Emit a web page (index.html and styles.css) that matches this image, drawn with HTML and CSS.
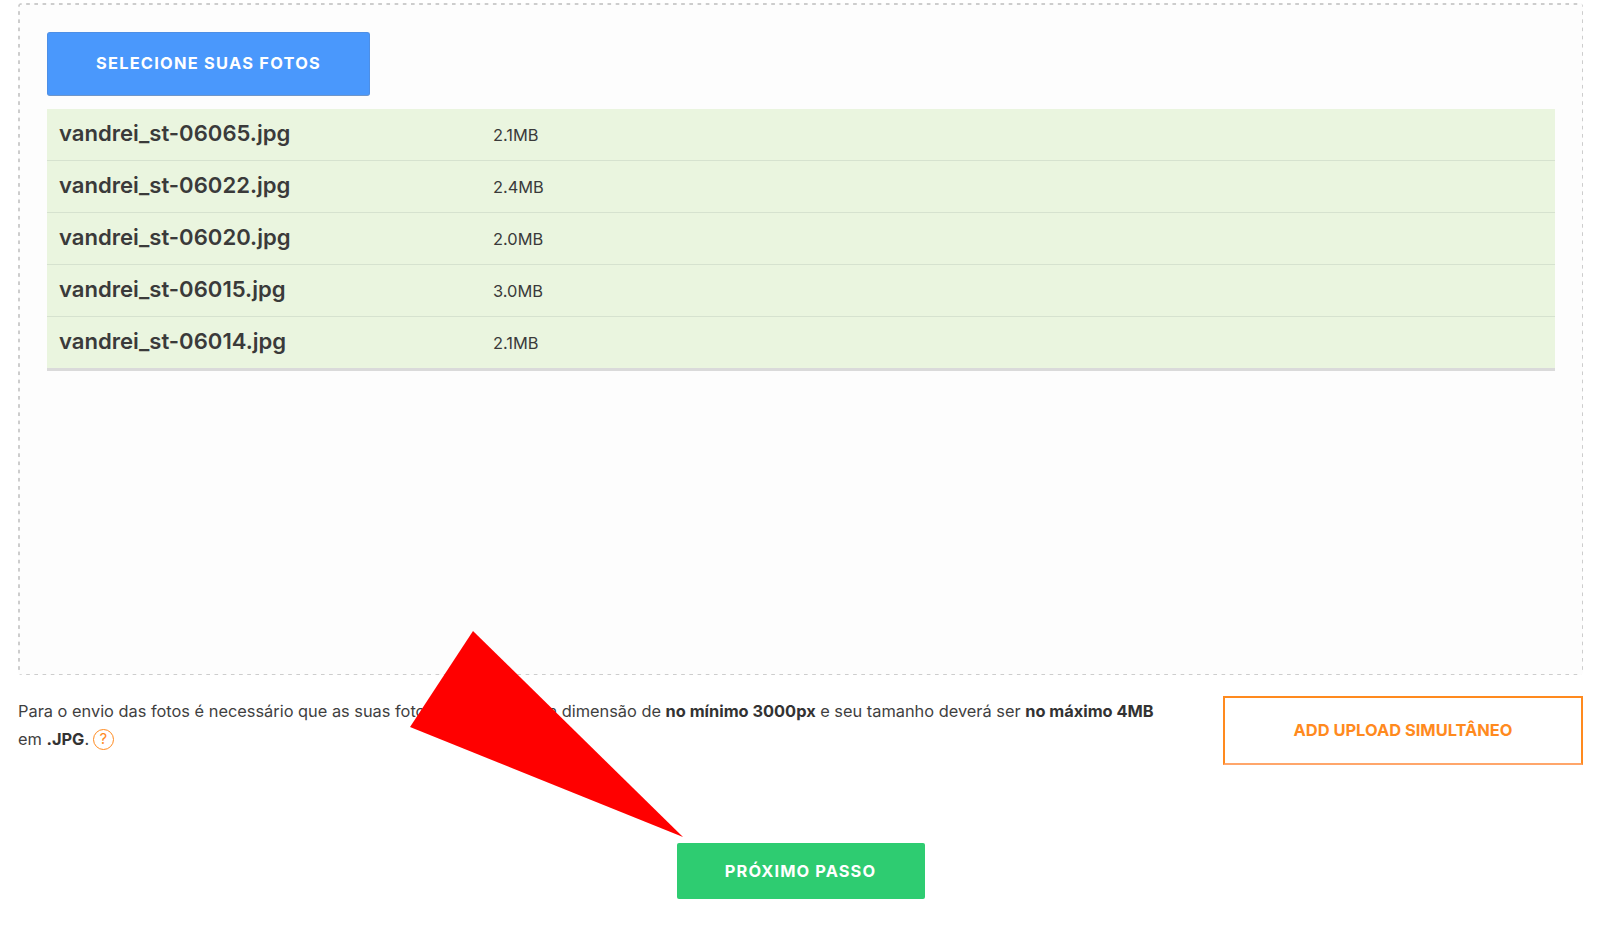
FILE: index.html
```html
<!DOCTYPE html>
<html lang="pt-BR">
<head>
<meta charset="utf-8">
<title>Envio de fotos</title>
<link rel="stylesheet" href="styles.css">
</head>
<body>
<main class="page">
  <section class="dropzone">
    <button class="select-btn" type="button">SELECIONE SUAS FOTOS</button>
    <ul class="files">
      <li class="file"><span class="file-name">vandrei_st-06065.jpg</span><span class="file-size">2.1MB</span></li>
      <li class="file"><span class="file-name">vandrei_st-06022.jpg</span><span class="file-size">2.4MB</span></li>
      <li class="file"><span class="file-name">vandrei_st-06020.jpg</span><span class="file-size">2.0MB</span></li>
      <li class="file"><span class="file-name">vandrei_st-06015.jpg</span><span class="file-size">3.0MB</span></li>
      <li class="file"><span class="file-name">vandrei_st-06014.jpg</span><span class="file-size">2.1MB</span></li>
    </ul>
  </section>
  <section class="info">
    <p class="note">Para o envio das fotos é necessário que as suas fotos tenham só uma dimensão de <strong>no mínimo 3000px</strong> e seu tamanho deverá ser <strong>no máximo 4MB</strong> em <strong>.JPG</strong>. <span class="help">?</span></p>
    <button class="add-btn" type="button">ADD UPLOAD SIMULTÂNEO</button>
  </section>
  <div class="next-row">
    <button class="next-btn" type="button">PRÓXIMO PASSO</button>
  </div>
</main>
<svg class="arrow" width="1600" height="931" viewBox="0 0 1600 931" aria-hidden="true"><polygon points="473,631 410,727 683,837" fill="#ff0000"/></svg>
</body>
</html>
```
FILE: styles.css
```css
* { box-sizing: border-box; }
html, body { margin: 0; height: 100%; }
body {
  background: #fff;
  color: #3a3a3a;
  font-family: Inter, "Liberation Sans", sans-serif;
  overflow: hidden;
}
.page { padding: 3px 17px 0 18px; }
.dropzone {
  height: 672px;
  padding: 29px 28px 0 29px;
  border-radius: 4px;
  background-color: #fdfdfd;
  background-image:
    linear-gradient(to right, #cdcdcd 50%, transparent 50%),
    linear-gradient(to right, #cdcdcd 50%, transparent 50%),
    linear-gradient(to bottom, #cdcdcd 50%, transparent 50%),
    linear-gradient(to bottom, #cdcdcd 50%, transparent 50%);
  background-size: 8.2px 1.5px, 8.2px 1.5px, 1.5px 8.2px, 1.5px 8.2px;
  background-position: 0 0, 0 100%, 0 0, 100% 0;
  background-repeat: repeat-x, repeat-x, repeat-y, repeat-y;
}
.select-btn {
  display: block;
  width: 323px;
  height: 64px;
  padding-bottom: 4px;
  background: #4a98fc;
  border: 1px solid #4d8fe6;
  border-bottom-color: #6f96c9;
  border-radius: 3px;
  color: #fff;
  font: 700 16.4px Inter, "Liberation Sans", sans-serif;
  letter-spacing: 1.25px;
}
.files {
  list-style: none;
  margin: 13px 0 0;
  padding: 0;
  border-bottom: 3px solid #dadada;
}
.file {
  display: flex;
  height: 52px;
  background: #eaf5df;
  border-bottom: 1px solid #d6e2cf;
}
.file:last-child { border-bottom: 0; height: 51px; }
.file-name {
  width: 446px;
  padding: 10.5px 0 0 12px;
  font-size: 22.1px;
  line-height: 26px;
  font-weight: 600;
}
.file-size {
  padding-top: 16px;
  font-size: 16.4px;
  line-height: 20px;
}
.info {
  display: flex;
  justify-content: space-between;
  margin-top: 21px;
}
.note {
  width: 1160px;
  margin: 0;
  padding-top: 1px;
  font-size: 16.36px;
  line-height: 28px;
  color: #3f3f3f;
}
.note strong { font-weight: 700; color: #333; }
.help {
  display: inline-block;
  width: 21px;
  height: 21px;
  margin-left: -1px;
  border: 1.5px solid #ff8a1e;
  border-radius: 50%;
  color: #ff8a1e;
  font-size: 15px;
  line-height: 18px;
  text-align: center;
  vertical-align: 1px;
}
.add-btn {
  width: 360px;
  height: 69px;
  padding-bottom: 3px;
  background: #fff;
  border: 2px solid #ff8a1e;
  border-bottom-color: #ffa66b;
  color: #ff8a1e;
  font: 700 16.45px Inter, "Liberation Sans", sans-serif;
}
.next-row {
  display: flex;
  justify-content: center;
  margin-top: 78px;
}
.next-btn {
  width: 248px;
  height: 56px;
  background: #2ecc71;
  border: 0;
  border-radius: 2px;
  color: #fff;
  font: 700 16.4px Inter, "Liberation Sans", sans-serif;
  letter-spacing: 1.1px;
}
.arrow {
  position: absolute;
  top: 0;
  left: 0;
  pointer-events: none;
}
```
